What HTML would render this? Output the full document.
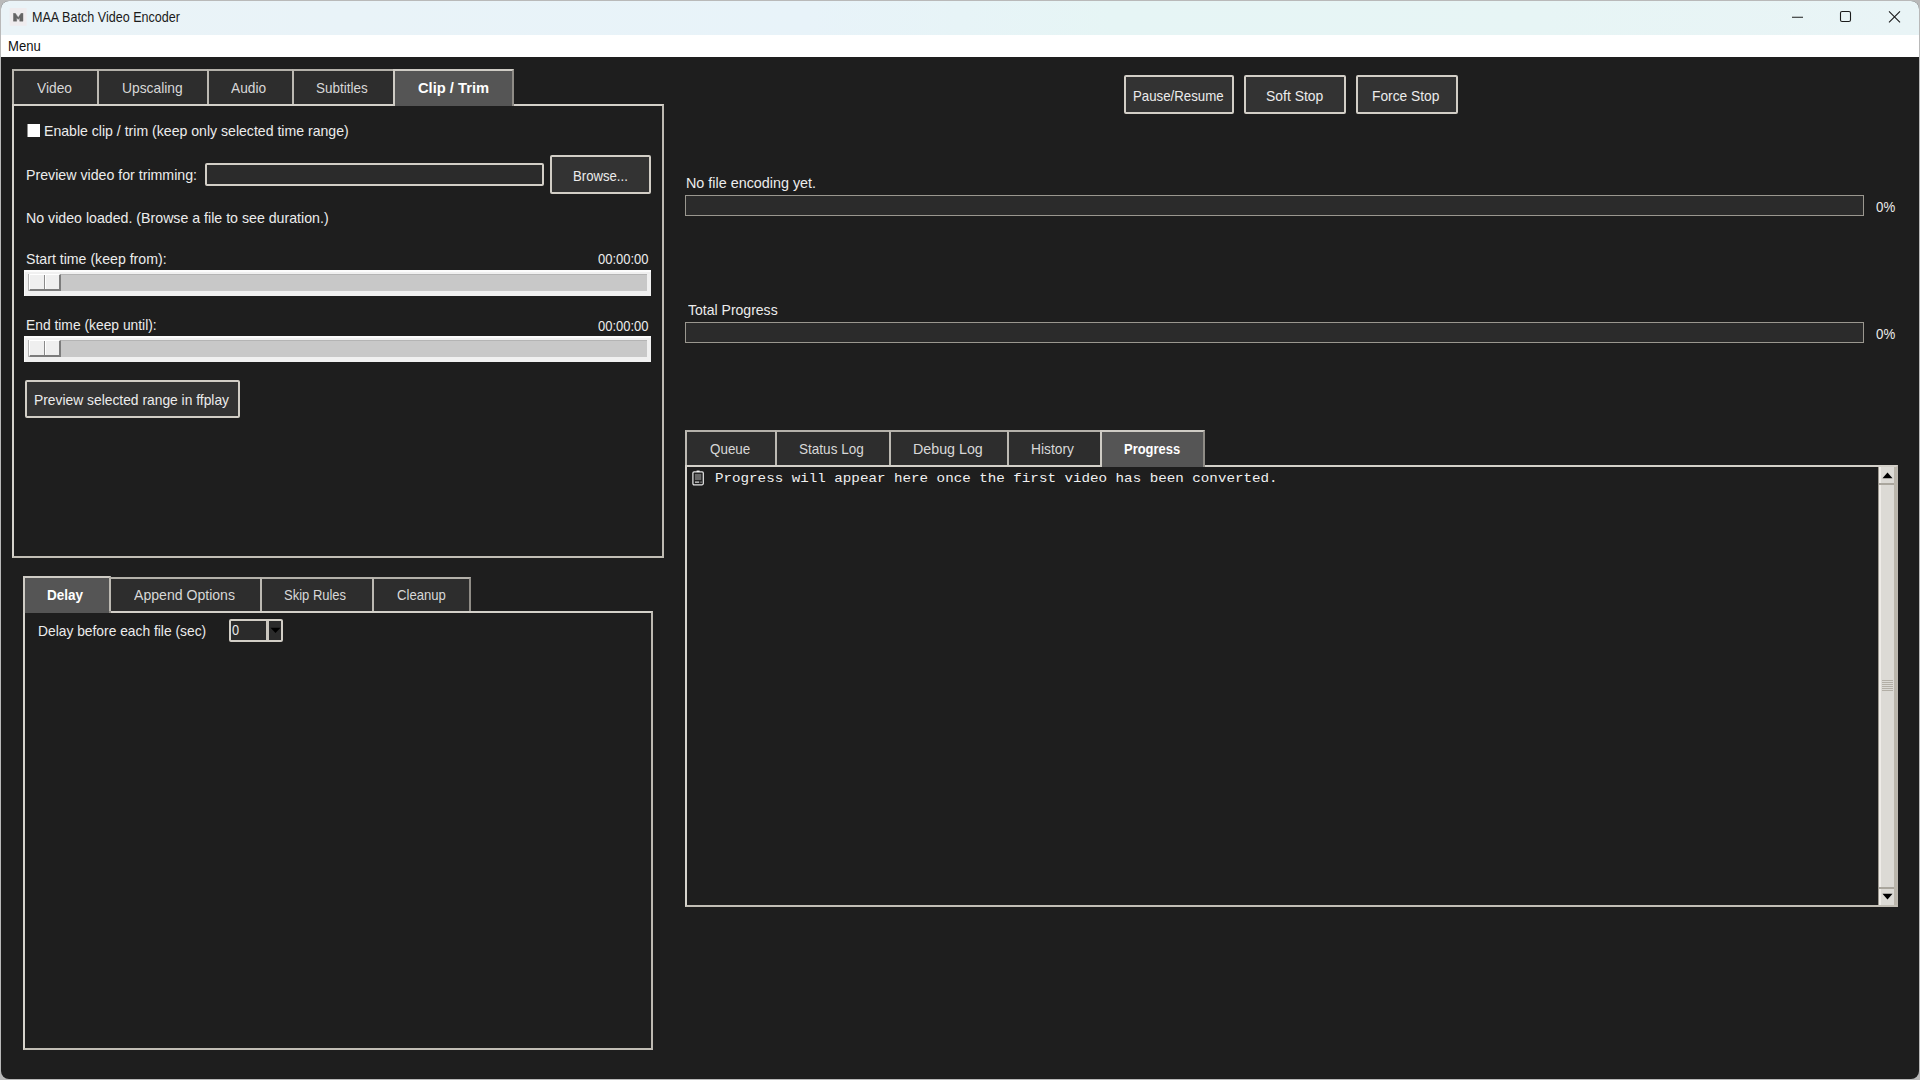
<!DOCTYPE html>
<html lang="en">
<head>
<meta charset="utf-8">
<title>MAA Batch Video Encoder</title>
<style>
*{box-sizing:border-box;margin:0;padding:0}
html,body{width:1920px;height:1080px;overflow:hidden;background:#b9b9b9;font-family:"Liberation Sans",sans-serif}
#win{position:absolute;left:1px;top:1px;width:1918px;height:1078px;border-radius:8px;overflow:hidden;background:#1e1e1e}
#stage{position:absolute;left:-1px;top:-1px;width:1920px;height:1080px}
.abs,.t,.tab,.frame,.btn,.entry,.pbar{position:absolute}
.t{white-space:pre;line-height:20px;height:20px;transform-origin:0 0}
#titlebar{left:0;top:0;width:1920px;height:35px;background:linear-gradient(90deg,#eaf3f7 0%,#e9f3f8 18%,#e8f3f9 42%,#e6f5f5 58%,#e7f5f5 80%,#e9f4f6 100%)}
#menubar{left:0;top:35px;width:1920px;height:22px;background:#ffffff}
.tab{background:#2d2d2d;border:2px solid #bcb9b2;border-top-color:#b4b1aa;border-bottom:none}
.tab.sel{background:#555555;border-color:#cfccc5;border-right-color:#8f8c86}
.frame{border:2px solid #cbc7bf;border-top-color:#d3d0c9;border-left-color:#d6d3cc;border-bottom-color:#c2beb5;border-right-color:#bdb9b1;background:#1e1e1e}
.btn{background:#333333;border:2px solid #d2cec6;border-radius:2px}
.entry{background:#2b2b2b;border:2px solid #d2cec6;border-radius:2px}
.pbar{background:#2b2b2b;border:1px solid #9a978f}
.scale{position:absolute;background:#f0f0f0;box-shadow:inset 1px 2px 0 #fcfcfc}
.trough{position:absolute;background:#c8c8c8;border-top:1px solid #b4b4b4;border-left:1px solid #b4b4b4}
.knob{position:absolute;background:#efefef;border-top:1px solid #fff;border-left:1px solid #fff;border-right:2px solid #7c7c7c;border-bottom:2px solid #7c7c7c}
.knob i{position:absolute;left:14px;top:0;width:2px;height:100%;background:linear-gradient(90deg,#8a8a8a 0 1px,#fff 1px 2px)}
</style>
</head>
<body>
<div id="win"><div id="stage">
  <div id="titlebar" class="abs"></div>
  <div id="menubar" class="abs"></div>

  <!-- app icon -->
  <svg class="abs" style="left:9px;top:7px" width="19" height="20" viewBox="0 0 19 20">
    <rect x="0.7" y="1" width="17" height="17.8" fill="#efecee"/>
    <path d="M4.4 14.2V6.2l1.9 0 2.9 4.2 2.9-4.2 1.9 0v8h-3.3v-3.4l-1.5 1.6-1.5-1.6v3.4z" fill="#5a5a5a" stroke="#5a5a5a" stroke-width="0.4" stroke-linejoin="round" opacity="0.92"/>
  </svg>
  <!-- caption buttons -->
  <svg class="abs" style="left:1780px;top:4px" width="130" height="26" viewBox="0 0 130 26">
    <path d="M12 13.3h11" stroke="#1c1c1c" stroke-width="1.1" fill="none"/>
    <rect x="60.5" y="7.5" width="10" height="10" rx="1.6" stroke="#1c1c1c" stroke-width="1.1" fill="none"/>
    <path d="M109 7.3l11 11M120 7.3l-11 11" stroke="#1c1c1c" stroke-width="1.1" fill="none"/>
  </svg>

  <!-- ===== top-left notebook ===== -->
  <div class="frame" style="left:12px;top:104px;width:652px;height:454px"></div>
  <div class="tab" style="left:12px;top:69px;width:87px;height:35px"></div>
  <div class="tab" style="left:97px;top:69px;width:112px;height:35px"></div>
  <div class="tab" style="left:207px;top:69px;width:87px;height:35px"></div>
  <div class="tab" style="left:292px;top:69px;width:104px;height:35px"></div>
  <div class="tab sel" style="left:393px;top:69px;width:121px;height:37px"></div>

  <!-- checkbox -->
  <div class="abs" style="left:28px;top:124px;width:12px;height:13px;background:#fff;box-shadow:-1px 0 0 #8d8d8d"></div>
  <!-- entry + browse -->
  <div class="entry" style="left:205px;top:163px;width:339px;height:23px"></div>
  <div class="btn" style="left:550px;top:155px;width:101px;height:39px"></div>

  <!-- scale 1 -->
  <div class="scale" style="left:24px;top:270px;width:627px;height:26px">
    <div class="trough" style="left:4px;top:4px;width:619px;height:17px"></div>
    <div class="knob" style="left:5px;top:4px;width:32px;height:17px"><i></i></div>
  </div>
  <!-- scale 2 -->
  <div class="scale" style="left:24px;top:336px;width:627px;height:26px">
    <div class="trough" style="left:4px;top:4px;width:619px;height:17px"></div>
    <div class="knob" style="left:5px;top:4px;width:32px;height:17px"><i></i></div>
  </div>
  <div class="btn" style="left:25px;top:380px;width:215px;height:38px"></div>

  <!-- ===== bottom-left notebook ===== -->
  <div class="frame" style="left:23px;top:611px;width:630px;height:439px"></div>
  <div class="tab sel" style="left:23px;top:576px;width:88px;height:37px"></div>
  <div class="tab" style="left:109px;top:577px;width:153px;height:34px"></div>
  <div class="tab" style="left:260px;top:577px;width:114px;height:34px"></div>
  <div class="tab" style="left:372px;top:577px;width:99px;height:34px;border-right-color:#8f8c86"></div>
  <!-- combobox -->
  <div class="entry" style="left:229px;top:619px;width:54px;height:23px"></div>
  <div class="abs" style="left:266px;top:621px;width:3px;height:19px;background:#cbc7bf"></div>
  <svg class="abs" style="left:270px;top:627px" width="11" height="7" viewBox="0 0 11 7"><path d="M0.5 0.8h10L5.5 6z" fill="#000"/></svg>

  <!-- ===== right side ===== -->
  <div class="btn" style="left:1124px;top:75px;width:110px;height:39px"></div>
  <div class="btn" style="left:1244px;top:75px;width:102px;height:39px"></div>
  <div class="btn" style="left:1356px;top:75px;width:102px;height:39px"></div>

  <div class="pbar" style="left:685px;top:195px;width:1179px;height:21px"></div>
  <div class="pbar" style="left:685px;top:322px;width:1179px;height:21px"></div>

  <div class="frame" style="left:685px;top:465px;width:1213px;height:442px"></div>
  <div class="tab" style="left:685px;top:430px;width:92px;height:35px"></div>
  <div class="tab" style="left:775px;top:430px;width:116px;height:35px"></div>
  <div class="tab" style="left:889px;top:430px;width:120px;height:35px"></div>
  <div class="tab" style="left:1007px;top:430px;width:95px;height:35px"></div>
  <div class="tab sel" style="left:1100px;top:430px;width:105px;height:37px"></div>

  <!-- scrollbar -->
  <div class="abs" style="left:1878px;top:467px;width:19px;height:438px;background:#dcdad5;border-left:1px solid #9e9a91;border-right:3px solid #bab5ab">
    <div class="abs" style="left:0;top:0;width:2px;height:100%;background:#efece8"></div>
    <div class="abs" style="left:0;top:16px;width:15px;height:2px;background:#aaa69d"></div>
    <div class="abs" style="left:0;top:420px;width:15px;height:2px;background:#aaa69d"></div>
    <svg class="abs" style="left:3px;top:5px" width="11" height="7" viewBox="0 0 11 7"><path d="M0.5 6.2h10L5.5 0.6z" fill="#000"/></svg>
    <svg class="abs" style="left:3px;top:426px" width="11" height="7" viewBox="0 0 11 7"><path d="M0.5 0.8h10L5.5 6.4z" fill="#000"/></svg>
    <div class="abs" style="left:3px;top:213px;width:11px;height:11px;background:repeating-linear-gradient(180deg,#b3afa6 0 1px,#dcdad5 1px 2px)"></div>
  </div>

  <!-- log emoji icon -->
  <svg class="abs" style="left:692px;top:470px" width="13" height="16" viewBox="0 0 13 16">
    <rect x="0.9" y="1.9" width="10.4" height="12.9" rx="1.2" fill="none" stroke="#e4e4e4" stroke-width="1.25"/>
    <rect x="2.9" y="3.9" width="6.4" height="6.2" fill="#686868"/>
    <path d="M4.6 1.3h3" stroke="#f4f4f4" stroke-width="1.5"/>
    <path d="M3 12.1h4.2M8.6 12.1h0.9" stroke="#dcdcdc" stroke-width="1.1"/>
  </svg>

<span class="t" style='left:31.69px;top:7.40px;font-size:14.5px;transform:scaleX(0.8675);color:#1b1b1b;'>MAA Batch Video Encoder</span>
<span class="t" style='left:8.37px;top:35.50px;font-size:14.5px;transform:scaleX(0.9012);color:#101010;'>Menu</span>
<span class="t" style='left:37.04px;top:78.30px;font-size:14.5px;transform:scaleX(0.9495);color:#d8d8d8;'>Video</span>
<span class="t" style='left:121.51px;top:78.30px;font-size:14.5px;transform:scaleX(0.9531);color:#d8d8d8;'>Upscaling</span>
<span class="t" style='left:231.34px;top:78.30px;font-size:14.5px;transform:scaleX(0.9457);color:#d8d8d8;'>Audio</span>
<span class="t" style='left:315.77px;top:78.30px;font-size:14.5px;transform:scaleX(0.9300);color:#d8d8d8;'>Subtitles</span>
<span class="t" style='left:417.56px;top:78.40px;font-size:14.5px;transform:scaleX(1.0136);color:#ffffff;font-weight:700;'>Clip / Trim</span>
<span class="t" style='left:43.96px;top:121.20px;font-size:14.5px;transform:scaleX(0.9718);color:#ececec;'>Enable clip / trim (keep only selected time range)</span>
<span class="t" style='left:25.76px;top:165.40px;font-size:14.5px;transform:scaleX(0.9782);color:#ececec;'>Preview video for trimming:</span>
<span class="t" style='left:572.75px;top:165.50px;font-size:14.5px;transform:scaleX(0.9071);color:#ececec;'>Browse...</span>
<span class="t" style='left:25.76px;top:207.90px;font-size:14.5px;transform:scaleX(0.9778);color:#ececec;'>No video loaded. (Browse a file to see duration.)</span>
<span class="t" style='left:26.15px;top:248.60px;font-size:14.5px;transform:scaleX(0.9746);color:#ececec;'>Start time (keep from):</span>
<span class="t" style='left:598.13px;top:249.00px;font-size:14.5px;transform:scaleX(0.8944);color:#ececec;'>00:00:00</span>
<span class="t" style='left:25.80px;top:315.40px;font-size:14.5px;transform:scaleX(0.9540);color:#ececec;'>End time (keep until):</span>
<span class="t" style='left:598.13px;top:315.80px;font-size:14.5px;transform:scaleX(0.8944);color:#ececec;'>00:00:00</span>
<span class="t" style='left:34.40px;top:389.90px;font-size:14.5px;transform:scaleX(0.9539);color:#ececec;'>Preview selected range in ffplay</span>
<span class="t" style='left:47.48px;top:585.00px;font-size:14.5px;transform:scaleX(0.9313);color:#ffffff;font-weight:700;'>Delay</span>
<span class="t" style='left:134.14px;top:585.00px;font-size:14.5px;transform:scaleX(0.9709);color:#d8d8d8;'>Append Options</span>
<span class="t" style='left:284.27px;top:585.00px;font-size:14.5px;transform:scaleX(0.8958);color:#d8d8d8;'>Skip Rules</span>
<span class="t" style='left:396.82px;top:585.00px;font-size:14.5px;transform:scaleX(0.9040);color:#d8d8d8;'>Cleanup</span>
<span class="t" style='left:37.60px;top:621.00px;font-size:14.5px;transform:scaleX(0.9526);color:#ececec;'>Delay before each file (sec)</span>
<span class="t" style='left:232.17px;top:619.70px;font-size:14.5px;transform:scaleX(0.8791);color:#ececec;'>0</span>
<span class="t" style='left:1132.95px;top:85.70px;font-size:14.5px;transform:scaleX(0.9137);color:#ececec;'>Pause/Resume</span>
<span class="t" style='left:1265.95px;top:85.70px;font-size:14.5px;transform:scaleX(0.9601);color:#ececec;'>Soft Stop</span>
<span class="t" style='left:1372.40px;top:85.70px;font-size:14.5px;transform:scaleX(0.9498);color:#ececec;'>Force Stop</span>
<span class="t" style='left:686.33px;top:173.40px;font-size:14.5px;transform:scaleX(0.9901);color:#ececec;'>No file encoding yet.</span>
<span class="t" style='left:1876.13px;top:197.10px;font-size:14.5px;transform:scaleX(0.9151);color:#ececec;'>0%</span>
<span class="t" style='left:687.65px;top:299.50px;font-size:14.5px;transform:scaleX(0.9673);color:#ececec;'>Total Progress</span>
<span class="t" style='left:1876.13px;top:323.60px;font-size:14.5px;transform:scaleX(0.9151);color:#ececec;'>0%</span>
<span class="t" style='left:709.67px;top:439.30px;font-size:14.5px;transform:scaleX(0.9246);color:#d8d8d8;'>Queue</span>
<span class="t" style='left:798.97px;top:439.30px;font-size:14.5px;transform:scaleX(0.9347);color:#d8d8d8;'>Status Log</span>
<span class="t" style='left:912.56px;top:439.30px;font-size:14.5px;transform:scaleX(0.9834);color:#d8d8d8;'>Debug Log</span>
<span class="t" style='left:1031.21px;top:439.30px;font-size:14.5px;transform:scaleX(0.9508);color:#d8d8d8;'>History</span>
<span class="t" style='left:1124.11px;top:439.30px;font-size:14.5px;transform:scaleX(0.8935);color:#ffffff;font-weight:700;'>Progress</span>
<span class="t" style='left:715.24px;top:469.40px;font-size:12.8px;transform:scaleX(1.1099);color:#f0f0f0;font-family:"Liberation Mono", monospace;'>Progress will appear here once the first video has been converted.</span>
</div></div>
</body>
</html>
